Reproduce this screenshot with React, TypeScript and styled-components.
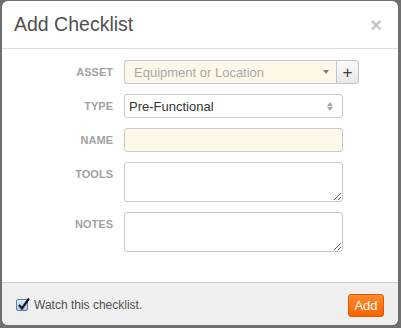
import * as React from 'react';
import styled, { createGlobalStyle } from 'styled-components';

const GlobalStyle = createGlobalStyle`
  html, body {
    margin: 0;
    padding: 0;
    background: #6f6f6f;
    font-family: "Liberation Sans", Arial, sans-serif;
  }
`;

const Backdrop = styled.div`
  width: 401px;
  height: 328px;
  padding: 1px 3px 3px 2px;
  box-sizing: border-box;
`;

const Modal = styled.div`
  width: 396px;
  height: 324px;
  background: #fff;
  border-radius: 6px;
  overflow: hidden;
  display: flex;
  flex-direction: column;
`;

const Header = styled.div`
  height: 47px;
  border-bottom: 1px solid #dcdcdc;
  display: flex;
  align-items: center;
  justify-content: space-between;
  padding: 0 16px 0 12px;
`;

const Title = styled.h3`
  margin: 0;
  font-size: 19.5px;
  font-weight: normal;
  color: #505050;
`;

const Close = styled.span`
  font-size: 20px;
  font-weight: bold;
  color: #c4c4c4;
  line-height: 1;
  margin-top: 1px;
`;

const Body = styled.div`
  flex: 1;
  padding: 11px 0 0 15px;
  display: grid;
  grid-template-columns: 96px 219px;
  column-gap: 11px;
  row-gap: 10px;
  align-content: start;
`;

const Label = styled.label`
  font-size: 11px;
  font-weight: bold;
  color: #a2a2a2;
  text-align: right;
  line-height: 24px;
`;

const Field = styled.div<{ $cream?: boolean; $height?: number }>`
  box-sizing: border-box;
  height: ${p => p.$height || 24}px;
  border: 1px solid #c9c9c9;
  border-radius: 3px;
  background: ${p => (p.$cream ? '#fef8e8' : '#fff')};
  font-size: 13px;
  color: #333;
  display: flex;
  align-items: center;
  padding: 0 8px 0 9px;
`;

const Combo = styled.div`
  display: flex;
  width: 235px;
`;

const ComboInput = styled(Field)`
  flex: 1;
  border-radius: 3px 0 0 3px;
  border-right: none;
  justify-content: space-between;
  color: #a8a8a8;
  padding-right: 7px;
`;

const PlusButton = styled.button`
  width: 23px;
  height: 24px;
  box-sizing: border-box;
  border: 1px solid #c4c4c4;
  border-radius: 0 3px 3px 0;
  background: linear-gradient(#fbfbfb, #e8e8e8);
  color: #3c3c3c;
  font-family: "Liberation Sans", Arial, sans-serif;
  font-size: 17px;
  font-weight: normal;
  padding: 0;
  line-height: 1;
`;

const Caret = styled.span`
  width: 0;
  height: 0;
  border-left: 3.5px solid transparent;
  border-right: 3.5px solid transparent;
  border-top: 4px solid #7c7c7c;
`;

const SelectBox = styled(Field)`
  justify-content: space-between;
  padding-left: 4px;
  padding-right: 9px;
`;

const Arrows = styled.span`
  display: flex;
  flex-direction: column;
  gap: 1px;
`;

const Arrow = styled.span<{ $up?: boolean }>`
  width: 0;
  height: 0;
  border-left: 3.5px solid transparent;
  border-right: 3.5px solid transparent;
  ${p => (p.$up ? 'border-bottom: 4px solid #a8a8a8;' : 'border-top: 4px solid #a8a8a8;')}
`;

const TextArea = styled.textarea`
  box-sizing: border-box;
  width: 219px;
  height: 40px;
  border: 1px solid #c9c9c9;
  border-radius: 3px;
  resize: both;
  font-family: "Liberation Sans", Arial, sans-serif;
  font-size: 13px;
  margin: 0;
  outline: none;
`;

const Footer = styled.div`
  height: 42px;
  border-top: 1px solid #cfcfcf;
  background: #efefef;
  display: flex;
  align-items: center;
  justify-content: space-between;
  padding: 0 14px 0 14px;
`;

const Watch = styled.label`
  display: flex;
  align-items: center;
  gap: 6px;
  font-size: 12px;
  color: #505050;
  margin-top: 1px;
`;

const CheckBox = styled.span`
  width: 12px;
  height: 12px;
  box-sizing: border-box;
  border: 1px solid #5c7fb0;
  border-radius: 2px;
  background: linear-gradient(#dfeafa, #a9c3ea);
  position: relative;
`;

const CheckMark = styled.svg`
  position: absolute;
  left: 0px;
  top: -3px;
`;

const AddButton = styled.button`
  width: 36px;
  height: 23px;
  box-sizing: border-box;
  border: 1px solid #e05a00;
  border-radius: 3px;
  background: linear-gradient(#ff8a2e, #f66300);
  color: #fff;
  font-family: "Liberation Sans", Arial, sans-serif;
  font-size: 13px;
  padding: 0;
  margin-top: 2px;
`;

const App = () => (
  <>
    <GlobalStyle />
    <Backdrop>
      <Modal>
        <Header>
          <Title>Add Checklist</Title>
          <Close>×</Close>
        </Header>
        <Body>
          <Label>ASSET</Label>
          <Combo>
            <ComboInput $cream>
              Equipment or Location
              <Caret />
            </ComboInput>
            <PlusButton>+</PlusButton>
          </Combo>
          <Label>TYPE</Label>
          <SelectBox>
            Pre-Functional
            <Arrows>
              <Arrow $up />
              <Arrow />
            </Arrows>
          </SelectBox>
          <Label>NAME</Label>
          <Field $cream />
          <Label>TOOLS</Label>
          <TextArea />
          <Label>NOTES</Label>
          <TextArea />
        </Body>
        <Footer>
          <Watch>
            <CheckBox>
              <CheckMark width="14" height="14" viewBox="0 0 14 14">
                <path d="M2 8 L5 11.5 L12 1.5" fill="none" stroke="#1a1a1a" strokeWidth="2.2" />
              </CheckMark>
            </CheckBox>
            Watch this checklist.
          </Watch>
          <AddButton>Add</AddButton>
        </Footer>
      </Modal>
    </Backdrop>
  </>
);

export default App;
